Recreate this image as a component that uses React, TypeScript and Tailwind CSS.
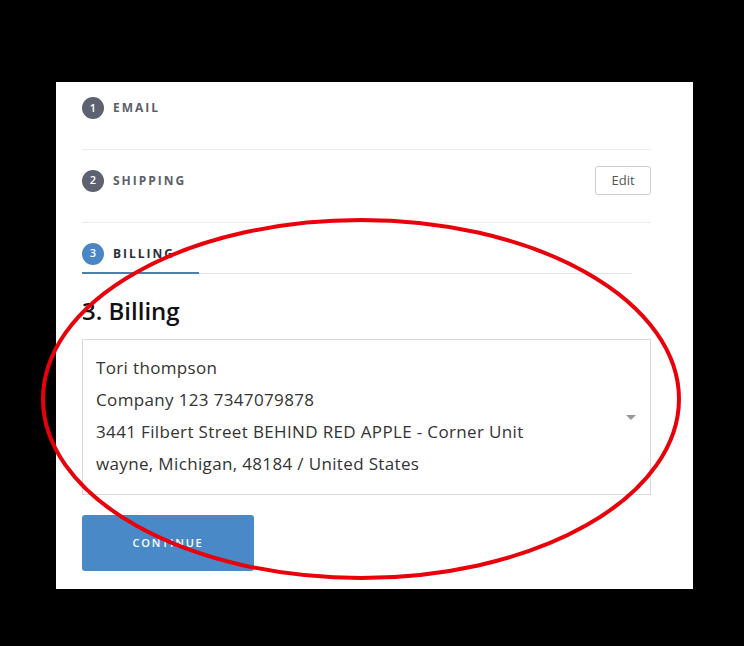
import React from 'react';

const font = { fontFamily: '"Open Sans", "Noto Sans", sans-serif' };

const StepHeader: React.FC<{ num: number; label: string; active?: boolean }> = ({ num, label, active }) => (
    <div className="flex items-center gap-[9px]">
        <span
            className={`flex h-[22px] w-[22px] items-center justify-center rounded-full text-[11px] font-semibold text-white ${active ? 'bg-[#4a86c5]' : 'bg-[#5d6170]'}`}
        >
            {num}
        </span>
        <span className={`text-[12px] font-bold tracking-[2px] ${active ? 'text-[#2a2f3a]' : 'text-[#5b5e69]'}`}>
            {label}
        </span>
    </div>
);

const App: React.FC = () => {
    const addressLines = [
        'Tori thompson',
        'Company 123 7347079878',
        '3441 Filbert Street BEHIND RED APPLE - Corner Unit',
        'wayne, Michigan, 48184 / United States',
    ];

    return (
        <div className="relative h-[646px] w-[744px] overflow-hidden bg-black pt-[82px] pl-[56px]" style={font}>
            <div className="h-[507px] w-[637px] bg-white pl-[26px] pr-[42px]">
                {/* step 1 */}
                <div className="h-[68px] border-b border-[#ececec] pt-[15px]">
                    <StepHeader num={1} label="EMAIL" />
                </div>

                {/* step 2 */}
                <div className="flex h-[73px] items-start justify-between border-b border-[#ececec] pt-[16px]">
                    <div className="flex h-[29px] items-center">
                        <StepHeader num={2} label="SHIPPING" />
                    </div>
                    <button className="h-[29px] w-[56px] rounded-[3px] border border-[#cfcfcf] text-[13px] text-[#555]">
                        Edit
                    </button>
                </div>

                {/* step 3 */}
                <div className="w-[550px] border-b border-[#e6e6e6] pt-[16px]">
                    <div className="-mb-px flex h-[35px] w-[117px] items-start border-b-2 border-[#4f7ea8]">
                        <div className="flex h-[29px] items-center">
                            <StepHeader num={3} label="BILLING" active />
                        </div>
                    </div>
                </div>

                <h2 className="mt-[21px] text-[24px] font-semibold leading-[32px] text-[#111]">3. Billing</h2>

                <div className="relative mt-[12px] w-[569px] border border-[#d9d9d9] pt-[12px] pb-[14px] pl-[13px]">
                    {addressLines.map(line => (
                        <div key={line} className="text-[17px] leading-[32px] tracking-[0.35px] text-[#333]">{line}</div>
                    ))}
                    <span className="absolute right-[14px] top-[75px] h-0 w-0 border-x-[5px] border-t-[5px] border-x-transparent border-t-[#999]" />
                </div>

                <button className="mt-[20px] h-[56px] w-[172px] rounded-[3px] bg-[#4a89c8] text-[11px] font-semibold tracking-[1.8px] text-white">
                    CONTINUE
                </button>
            </div>

            <svg className="pointer-events-none absolute left-0 top-0" width="744" height="646">
                <ellipse cx="361" cy="399" rx="318" ry="179" fill="none" stroke="#e8000a" strokeWidth="4" />
            </svg>
        </div>
    );
};

export default App;
